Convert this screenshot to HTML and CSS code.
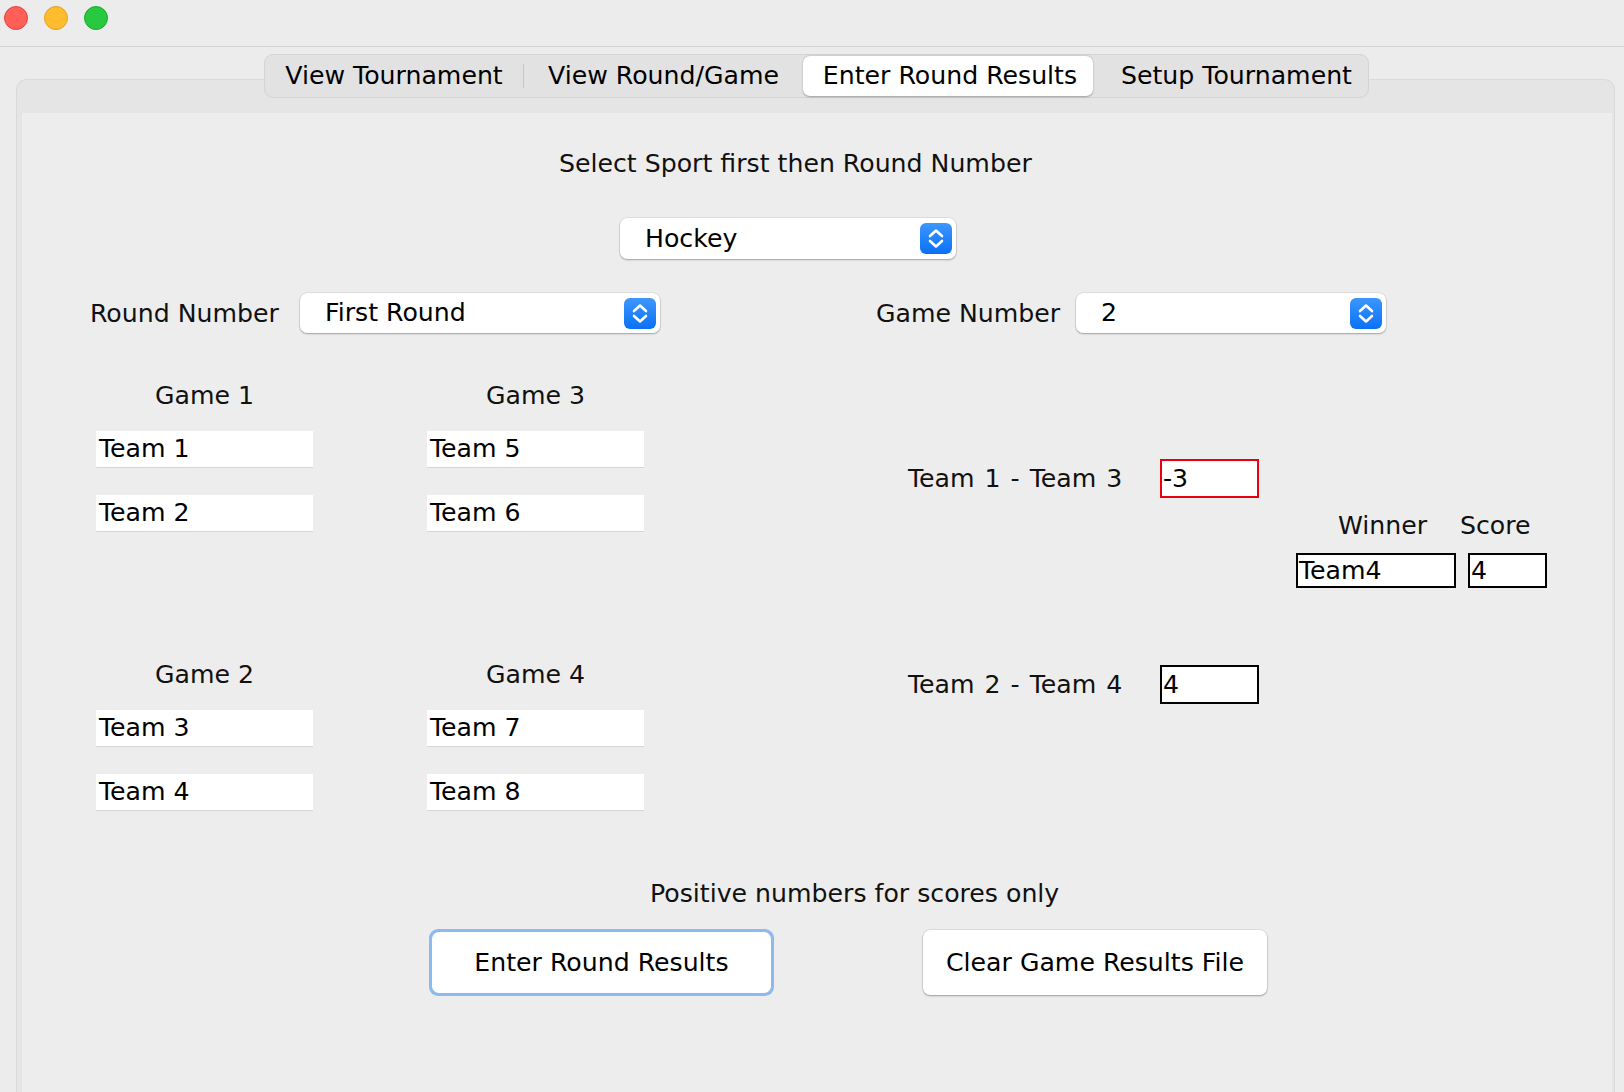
FILE: index.html
```html
<!DOCTYPE html>
<html>
<head>
<meta charset="utf-8">
<title>Tournament</title>
<link rel="stylesheet" href="styles.css">
</head>
<body>
<div class="titlebar">
  <span class="light red"></span>
  <span class="light yellow"></span>
  <span class="light green"></span>
</div>
<div class="tabs-area">
  <div class="tabstrip">
    <div class="tab t1">View Tournament</div>
    <div class="tab-divider"></div>
    <div class="tab t2">View Round/Game</div>
    <div class="tab t3 selected">Enter Round Results</div>
    <div class="tab t4">Setup Tournament</div>
  </div>
  <div class="panel">
    <div class="content">
      <div class="sport-title">Select Sport first then Round Number</div>
      <div class="sport-row">
        <div class="combo combo-sport">
          <span class="combo-text">Hockey</span>
          <span class="combo-btn"><svg viewBox="0 0 32 31" width="32" height="31"><path d="M10 13 L16 7.5 L22 13" /><path d="M10 18 L16 23.5 L22 18" /></svg></span>
        </div>
      </div>
      <div class="select-row">
        <span class="round-lbl">Round Number</span>
        <div class="combo combo-round">
          <span class="combo-text">First Round</span>
          <span class="combo-btn"><svg viewBox="0 0 32 31" width="32" height="31"><path d="M10 13 L16 7.5 L22 13" /><path d="M10 18 L16 23.5 L22 18" /></svg></span>
        </div>
        <span class="game-lbl">Game Number</span>
        <div class="combo combo-game">
          <span class="combo-text">2</span>
          <span class="combo-btn"><svg viewBox="0 0 32 31" width="32" height="31"><path d="M10 13 L16 7.5 L22 13" /><path d="M10 18 L16 23.5 L22 18" /></svg></span>
        </div>
      </div>
      <div class="main">
        <div class="games">
          <div class="game">
            <div class="game-title">Game 1</div>
            <div class="team first">Team 1</div>
            <div class="team second">Team 2</div>
          </div>
          <div class="game">
            <div class="game-title">Game 3</div>
            <div class="team first">Team 5</div>
            <div class="team second">Team 6</div>
          </div>
          <div class="game">
            <div class="game-title">Game 2</div>
            <div class="team first">Team 3</div>
            <div class="team second">Team 4</div>
          </div>
          <div class="game">
            <div class="game-title">Game 4</div>
            <div class="team first">Team 7</div>
            <div class="team second">Team 8</div>
          </div>
        </div>
        <div class="matches">
          <div class="match">
            <span class="match-lbl">Team 1 - Team 3</span>
            <div class="box match-field error">-3</div>
          </div>
          <div class="winner">
            <div class="winner-heads">
              <span class="head-winner">Winner</span>
              <span class="head-score">Score</span>
            </div>
            <div class="winner-fields">
              <div class="box winner-field">Team4</div>
              <div class="box score-field">4</div>
            </div>
          </div>
          <div class="match match2">
            <span class="match-lbl">Team 2 - Team 4</span>
            <div class="box match-field">4</div>
          </div>
        </div>
      </div>
      <div class="note">Positive numbers for scores only</div>
      <div class="buttons">
        <div class="btn focused"><span class="btn-face">Enter Round Results</span></div>
        <div class="btn plain"><span class="btn-face">Clear Game Results File</span></div>
      </div>
    </div>
  </div>
</div>
</body>
</html>
```

FILE: styles.css
```css
* { box-sizing: border-box; }
html, body { margin: 0; padding: 0; }
body {
  width: 1624px;
  height: 1092px;
  overflow: hidden;
  background: #ececec;
  font-family: "DejaVu Sans", "Liberation Sans", sans-serif;
  font-size: 25.2px;
  color: #111;
}

/* title bar */
.titlebar {
  height: 47px;
  border-bottom: 1px solid #d3d3d3;
  display: flex;
  gap: 16px;
  padding: 6px 0 0 4px;
}
.light { width: 24px; height: 24px; border-radius: 50%; display: block; }
.red { background: #ff5f57; border: 1px solid #e2463f; }
.yellow { background: #febc2e; border: 1px solid #dea123; }
.green { background: #28c840; border: 1px solid #1aab29; }

/* tabs */
.tabs-area {
  display: flex;
  flex-direction: column;
  padding: 7px 0 0 16px;
  width: 1615px;
}
.tabstrip {
  align-self: center;
  margin-left: 2px;
  position: relative;
  z-index: 1;
  display: flex;
  align-items: stretch;
  height: 44px;
  width: 1105px;
  padding: 1px 0;
  background: #e2e2e2;
  border: 1px solid #d4d4d4;
  border-radius: 9px;
}
.tab {
  display: flex;
  align-items: center;
  justify-content: center;
  white-space: nowrap;
  color: #000;
  line-height: 1;
}
.t1 { width: 258px; }
.t2 { width: 279px; }
.t3 { width: 290px; padding-left: 4px; }
.t4 { width: 275px; padding-left: 12px; }
.tab-divider {
  width: 1px;
  align-self: center;
  height: 24px;
  background: #c6c6c6;
}
.tab.selected {
  background: #fff;
  border-radius: 7px;
  box-shadow: 0 0.5px 2px rgba(0, 0, 0, 0.3);
}

/* panel */
.panel {
  margin-top: -19px;
  width: 1599px;
  height: 1040px;
  background: #e5e5e5;
  border: 1px solid #dadada;
  border-bottom: none;
  border-radius: 11px 11px 0 0;
  padding: 33px 2px 0 5px;
}
.content {
  background: #ededed;
  height: 100%;
}

.sport-title {
  padding-top: 36px;
  padding-left: 537px;
  height: 66px;
  line-height: 30px;
  white-space: nowrap;
}
.sport-row {
  margin-top: 39px;
  padding-left: 598px;
}

/* combo boxes */
.combo {
  position: relative;
  display: flex;
  align-items: center;
  background: #fff;
  border-radius: 7px;
  box-shadow: 0 0 0 0.5px rgba(0, 0, 0, 0.12), 0 1px 2px rgba(0, 0, 0, 0.28);
  padding-left: 25px;
  color: #000;
}
.combo-sport { width: 336px; height: 41px; }
.combo-round { width: 360px; height: 40px; }
.combo-game { width: 310px; height: 40px; }
.combo-text { line-height: 1; }
.combo-btn {
  position: absolute;
  right: 4px;
  top: 50%;
  margin-top: -15.5px;
  width: 32px;
  height: 31px;
  border-radius: 6px;
  background: linear-gradient(#3c97ff, #0a70f5);
  display: block;
}
.combo-btn svg { display: block; }
.combo-btn path {
  fill: none;
  stroke: #fff;
  stroke-width: 2.6;
  stroke-linecap: round;
  stroke-linejoin: round;
}

.select-row {
  margin-top: 34px;
  height: 40px;
  display: flex;
  align-items: center;
  padding-left: 68px;
}
.round-lbl { width: 210px; white-space: nowrap; }
.game-lbl { width: 200px; margin-left: 216px; white-space: nowrap; }

/* main area */
.main {
  display: flex;
  align-items: flex-start;
}
.games {
  padding: 48px 0 0 74px;
  display: grid;
  grid-template-columns: 217px 217px;
  column-gap: 114px;
  row-gap: 129px;
}
.game-title {
  height: 30px;
  line-height: 30px;
  text-align: center;
  white-space: nowrap;
}
.team {
  height: 36px;
  line-height: 36px;
  background: #fff;
  box-shadow: 0 1px 0 #d6d6d6;
  padding-left: 3px;
  color: #000;
  white-space: nowrap;
}
.team.first { margin-top: 20px; }
.team.second { margin-top: 28px; }

.matches {
  margin-left: 264px;
  padding-top: 126px;
}
.match {
  display: flex;
  align-items: center;
  height: 39px;
}
.match-lbl { width: 252px; white-space: nowrap; word-spacing: 2px; }
.box {
  background: #fff;
  border: 2px solid #000;
  color: #000;
  padding-left: 1px;
  white-space: nowrap;
  display: flex;
  align-items: center;
}
.match-field { width: 99px; height: 39px; }
.box.error { border-color: #e8000b; }
.match2 { margin-top: 77px; }

.winner {
  margin-left: 388px;
  margin-top: 13px;
}
.winner-heads {
  display: flex;
  height: 30px;
  line-height: 30px;
  padding-left: 42px;
}
.head-winner { width: 122px; }
.winner-fields {
  display: flex;
  gap: 12px;
  margin-top: 12px;
}
.winner-field { width: 160px; height: 35px; }
.score-field { width: 79px; height: 35px; }

.note {
  margin-top: 69px;
  padding-left: 628px;
  height: 30px;
  line-height: 30px;
  white-space: nowrap;
}

.buttons {
  margin-top: 20px;
  padding-left: 407px;
  display: flex;
  align-items: center;
}
.btn {
  display: flex;
  border-radius: 9px;
}
.btn-face {
  flex: 1;
  display: flex;
  align-items: center;
  justify-content: center;
  background: #fff;
  border-radius: 7px;
  color: #000;
  white-space: nowrap;
}
.btn.focused {
  width: 345px;
  height: 67px;
  padding: 3px;
  background: #8cb9ef;
}
.btn.plain {
  width: 344px;
  height: 65px;
  margin-left: 149px;
}
.btn.plain .btn-face {
  box-shadow: 0 0 0 0.5px rgba(0, 0, 0, 0.12), 0 1px 2px rgba(0, 0, 0, 0.3);
}
```
